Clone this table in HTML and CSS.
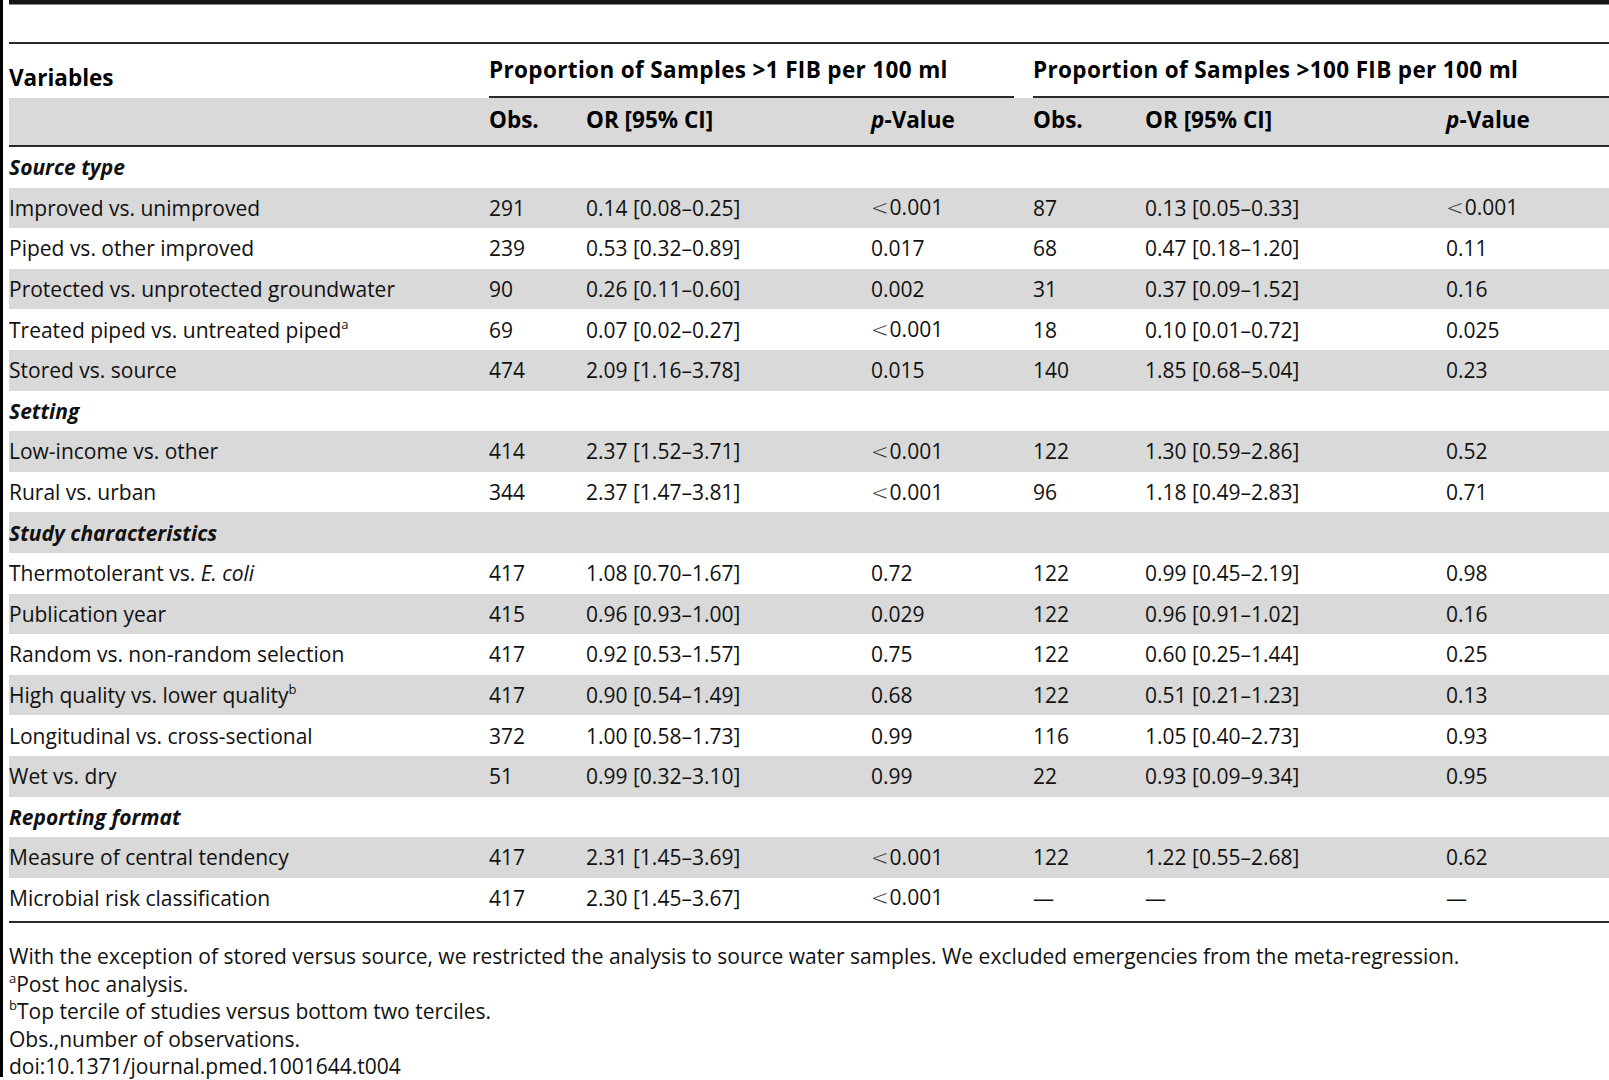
FILE: index.html
```html
<!DOCTYPE html>
<html>
<head>
<meta charset="utf-8">
<link rel="stylesheet" href="styles.css">
</head>
<body>
<div class="page">
  <div class="topline"></div>
  <table class="data">
    <colgroup>
      <col class="c-var"><col class="c-obs1"><col class="c-or1"><col class="c-p1"><col class="c-obs2"><col class="c-or2"><col class="c-p2">
    </colgroup>
    <thead>
      <tr class="h1">
        <th class="varhead">Variables</th>
        <th colspan="3" class="grp"><div class="grp-in grp-gap">Proportion of Samples &gt;1 FIB per 100 ml</div></th>
        <th colspan="3" class="grp"><div class="grp-in">Proportion of Samples &gt;100 FIB per 100 ml</div></th>
      </tr>
      <tr class="h2">
        <th></th>
        <th>Obs.</th><th>OR [95% CI]</th><th><i>p</i>-Value</th>
        <th>Obs.</th><th>OR [95% CI]</th><th><i>p</i>-Value</th>
      </tr>
    </thead>
    <tbody>
      <tr class="sec"><td colspan="7"><i>Source type</i></td></tr>
      <tr class="g"><td>Improved vs. unimproved</td><td>291</td><td>0.14 [0.08–0.25]</td><td><span class="lt">&lt;</span>0.001</td><td>87</td><td>0.13 [0.05–0.33]</td><td><span class="lt">&lt;</span>0.001</td></tr>
      <tr><td>Piped vs. other improved</td><td>239</td><td>0.53 [0.32–0.89]</td><td>0.017</td><td>68</td><td>0.47 [0.18–1.20]</td><td>0.11</td></tr>
      <tr class="g"><td>Protected vs. unprotected groundwater</td><td>90</td><td>0.26 [0.11–0.60]</td><td>0.002</td><td>31</td><td>0.37 [0.09–1.52]</td><td>0.16</td></tr>
      <tr><td>Treated piped vs. untreated piped<sup>a</sup></td><td>69</td><td>0.07 [0.02–0.27]</td><td><span class="lt">&lt;</span>0.001</td><td>18</td><td>0.10 [0.01–0.72]</td><td>0.025</td></tr>
      <tr class="g"><td>Stored vs. source</td><td>474</td><td>2.09 [1.16–3.78]</td><td>0.015</td><td>140</td><td>1.85 [0.68–5.04]</td><td>0.23</td></tr>
      <tr class="sec"><td colspan="7"><i>Setting</i></td></tr>
      <tr class="g"><td>Low-income vs. other</td><td>414</td><td>2.37 [1.52–3.71]</td><td><span class="lt">&lt;</span>0.001</td><td>122</td><td>1.30 [0.59–2.86]</td><td>0.52</td></tr>
      <tr><td>Rural vs. urban</td><td>344</td><td>2.37 [1.47–3.81]</td><td><span class="lt">&lt;</span>0.001</td><td>96</td><td>1.18 [0.49–2.83]</td><td>0.71</td></tr>
      <tr class="sec g"><td colspan="7"><i>Study characteristics</i></td></tr>
      <tr><td>Thermotolerant vs. <i>E. coli</i></td><td>417</td><td>1.08 [0.70–1.67]</td><td>0.72</td><td>122</td><td>0.99 [0.45–2.19]</td><td>0.98</td></tr>
      <tr class="g"><td>Publication year</td><td>415</td><td>0.96 [0.93–1.00]</td><td>0.029</td><td>122</td><td>0.96 [0.91–1.02]</td><td>0.16</td></tr>
      <tr><td>Random vs. non-random selection</td><td>417</td><td>0.92 [0.53–1.57]</td><td>0.75</td><td>122</td><td>0.60 [0.25–1.44]</td><td>0.25</td></tr>
      <tr class="g"><td>High quality vs. lower quality<sup>b</sup></td><td>417</td><td>0.90 [0.54–1.49]</td><td>0.68</td><td>122</td><td>0.51 [0.21–1.23]</td><td>0.13</td></tr>
      <tr><td>Longitudinal vs. cross-sectional</td><td>372</td><td>1.00 [0.58–1.73]</td><td>0.99</td><td>116</td><td>1.05 [0.40–2.73]</td><td>0.93</td></tr>
      <tr class="g"><td>Wet vs. dry</td><td>51</td><td>0.99 [0.32–3.10]</td><td>0.99</td><td>22</td><td>0.93 [0.09–9.34]</td><td>0.95</td></tr>
      <tr class="sec"><td colspan="7"><i>Reporting format</i></td></tr>
      <tr class="g"><td>Measure of central tendency</td><td>417</td><td>2.31 [1.45–3.69]</td><td><span class="lt">&lt;</span>0.001</td><td>122</td><td>1.22 [0.55–2.68]</td><td>0.62</td></tr>
      <tr class="last"><td>Microbial risk classification</td><td>417</td><td>2.30 [1.45–3.67]</td><td><span class="lt">&lt;</span>0.001</td><td>—</td><td>—</td><td>—</td></tr>
    </tbody>
  </table>
  <div class="notes">
    <p>With the exception of stored versus source, we restricted the analysis to source water samples. We excluded emergencies from the meta-regression.</p>
    <p><sup>a</sup>Post hoc analysis.</p>
    <p><sup>b</sup>Top tercile of studies versus bottom two terciles.</p>
    <p>Obs.,number of observations.</p>
    <p>doi:10.1371/journal.pmed.1001644.t004</p>
  </div>
</div>
</body>
</html>
```

FILE: styles.css
```css
html, body {
  margin: 0;
  padding: 0;
  background: #fff;
}
body {
  font-family: "Open Sans", "DejaVu Sans", sans-serif;
  font-size: 21px;
  color: #111;
  width: 1609px;
  height: 1080px;
  overflow: hidden;
}
.page {
  border-left: 3px solid #000;
  padding-left: 6px;
  height: 1077px;
}
.topline {
  height: 4px;
  background: #151515;
  border-bottom: 1px solid #8a8a8a;
  margin-bottom: 37px;
}
.data {
  width: 1600px;
  border-collapse: collapse;
  table-layout: fixed;
  border-top: 2px solid #2a2a2a;
  border-bottom: 2px solid #2a2a2a;
}
.c-var { width: 480px; }
.c-obs1 { width: 97px; }
.c-or1 { width: 285px; }
.c-p1 { width: 162px; }
.c-obs2 { width: 112px; }
.c-or2 { width: 301px; }
.c-p2 { width: 163px; }
th, td {
  padding: 0;
  text-align: left;
  white-space: nowrap;
}
th {
  font-weight: 700;
  font-size: 22.5px;
  color: #000;
}
.varhead {
  vertical-align: top;
  padding-top: 20px;
  line-height: 28px;
}
.h1 .grp {
  vertical-align: bottom;
}
.grp-in {
  line-height: 52px;
  height: 52px;
  letter-spacing: 0.35px;
  border-bottom: 2px solid #2a2a2a;
}
.grp-gap {
  margin-right: 19px;
}
.h2 th {
  background: #d9d9d9;
  height: 43px;
  line-height: 28px;
  vertical-align: middle;
  padding-bottom: 4px;
  border-bottom: 2px solid #2a2a2a;
}
tbody td {
  height: 40.6px;
  line-height: 28px;
  vertical-align: middle;
}
tbody tr.last td {
  height: 40.6px;
  padding-bottom: 3px;
}
tbody tr.g td {
  background: #d9d9d9;
}
.sec td {
  font-weight: 700;
}
.lt {
  font-family: "DejaVu Sans", sans-serif;
  font-weight: 300;
  color: #333;
  margin-right: 1px;
}
sup {
  font-size: 13px;
  line-height: 0;
  vertical-align: 9px;
}
.notes {
  margin-top: 20px;
  line-height: 27.4px;
}
.notes p {
  margin: 0;
}
```
